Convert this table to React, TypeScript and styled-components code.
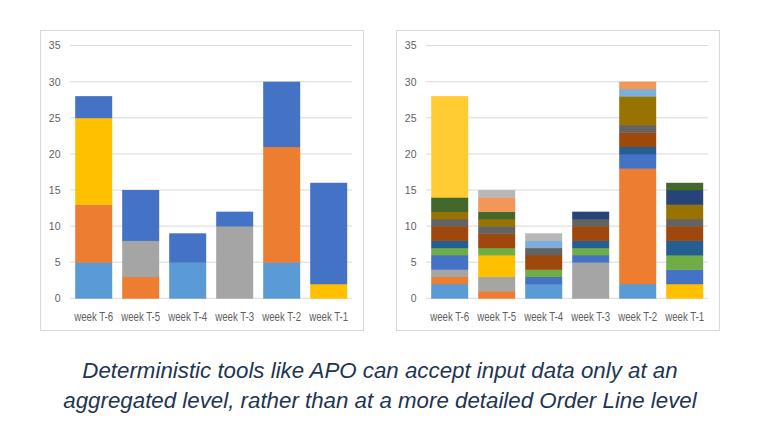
import React from 'react';
import styled, { createGlobalStyle } from 'styled-components';

const GlobalStyle = createGlobalStyle`
  body {
    margin: 0;
    background: #ffffff;
  }
`;

const palette = {
  lb: '#5B9BD5',
  or: '#ED7D31',
  gr: '#A5A5A5',
  ye: '#FFC000',
  bl: '#4472C4',
  gn: '#70AD47',
  db: '#255E91',
  br: '#9E480E',
  dg: '#636363',
  ol: '#997300',
  nv: '#264478',
  dgn: '#43682B',
  lb2: '#7CAFDD',
  lo: '#F1975A',
  lg: '#B7B7B7',
  ly: '#FFCD33',
};

type Key = keyof typeof palette;
type Segment = [number, Key];

const weeks = ['week T-6', 'week T-5', 'week T-4', 'week T-3', 'week T-2', 'week T-1'];

const aggregated: Segment[][] = [
  [[5, 'lb'], [8, 'or'], [12, 'ye'], [3, 'bl']],
  [[3, 'or'], [5, 'gr'], [7, 'bl']],
  [[5, 'lb'], [4, 'bl']],
  [[10, 'gr'], [2, 'bl']],
  [[5, 'lb'], [16, 'or'], [9, 'bl']],
  [[2, 'ye'], [14, 'bl']],
];

const detailed: Segment[][] = [
  [[2, 'lb'], [1, 'or'], [1, 'gr'], [2, 'bl'], [1, 'gn'], [1, 'db'], [2, 'br'], [1, 'dg'], [1, 'ol'], [2, 'dgn'], [14, 'ly']],
  [[1, 'or'], [2, 'gr'], [3, 'ye'], [1, 'gn'], [2, 'br'], [1, 'dg'], [1, 'ol'], [1, 'dgn'], [2, 'lo'], [1, 'lg']],
  [[2, 'lb'], [1, 'bl'], [1, 'gn'], [2, 'br'], [1, 'dg'], [1, 'lb2'], [1, 'lg']],
  [[5, 'gr'], [1, 'bl'], [1, 'gn'], [1, 'db'], [2, 'br'], [1, 'dg'], [1, 'nv']],
  [[2, 'lb'], [16, 'or'], [2, 'bl'], [1, 'db'], [2, 'br'], [1, 'dg'], [4, 'ol'], [1, 'lb2'], [1, 'lo']],
  [[2, 'ye'], [2, 'bl'], [2, 'gn'], [2, 'db'], [2, 'br'], [1, 'dg'], [2, 'ol'], [2, 'nv'], [1, 'dgn']],
];

// plot geometry (inside the panel border)
const BASE_Y = 267.3;
const UNIT = 7.22;
const PLOT_LEFT = 29;
const PLOT_RIGHT = 311;
const CATEGORY = 47;
const BAR_W = 37;

const Page = styled.div`
  width: 680px;
  padding: 30px 0 0 40px;
`;

const ChartsRow = styled.div`
  display: flex;
  gap: 32px;
`;

const ChartPanel = styled.div`
  width: 324px;
  height: 301px;
  box-sizing: border-box;
  border: 1px solid #d9d9d9;
  background: #ffffff;

  svg {
    display: block;
  }
`;

const TickLabel = styled.text<{ $size?: number }>`
  font-family: 'Liberation Sans', Arial, sans-serif;
  font-size: ${p => p.$size ?? 10.5}px;
  fill: #5f5f5f;
`;

const Caption = styled.p`
  margin: 25px 0 0;
  font-family: 'Liberation Sans', Arial, sans-serif;
  font-style: italic;
  font-size: 22.3px;
  line-height: 30px;
  color: #1f3553;
  text-align: center;
  white-space: nowrap;
`;

const StackedChart = ({ data }: { data: Segment[][] }) => {
  const ticks = [0, 5, 10, 15, 20, 25, 30, 35];
  return (
    <ChartPanel>
      <svg width={322} height={299} viewBox="0 0 322 299">
        {ticks.map(t => {
          const y = BASE_Y - t * UNIT;
          return (
            <g key={t}>
              <line x1={PLOT_LEFT} x2={PLOT_RIGHT} y1={y} y2={y} stroke="#d9d9d9" strokeWidth={1} />
              <TickLabel x={19.5} y={y + 3.8} textAnchor="end">
                {t}
              </TickLabel>
            </g>
          );
        })}
        {data.map((stack, i) => {
          const x = PLOT_LEFT + i * CATEGORY + 5.2;
          let acc = 0;
          return (
            <g key={i}>
              {stack.map(([h, c], j) => {
                const top = BASE_Y - (acc + h) * UNIT;
                acc += h;
                return (
                  <rect
                    key={j}
                    x={x}
                    y={top}
                    width={BAR_W}
                    height={h * UNIT + 0.4}
                    fill={palette[c]}
                  />
                );
              })}
              <TickLabel
                $size={12.5}
                x={x + BAR_W / 2}
                y={290}
                textAnchor="middle"
                textLength={39}
                lengthAdjust="spacingAndGlyphs"
              >
                {weeks[i]}
              </TickLabel>
            </g>
          );
        })}
      </svg>
    </ChartPanel>
  );
};

const App = () => {
  return (
    <>
      <GlobalStyle />
      <Page>
        <ChartsRow>
          <StackedChart data={aggregated} />
          <StackedChart data={detailed} />
        </ChartsRow>
        <Caption>
          Deterministic tools like APO can accept input data only at an
          <br />
          aggregated level, rather than at a more detailed Order Line level
        </Caption>
      </Page>
    </>
  );
};

export default App;
